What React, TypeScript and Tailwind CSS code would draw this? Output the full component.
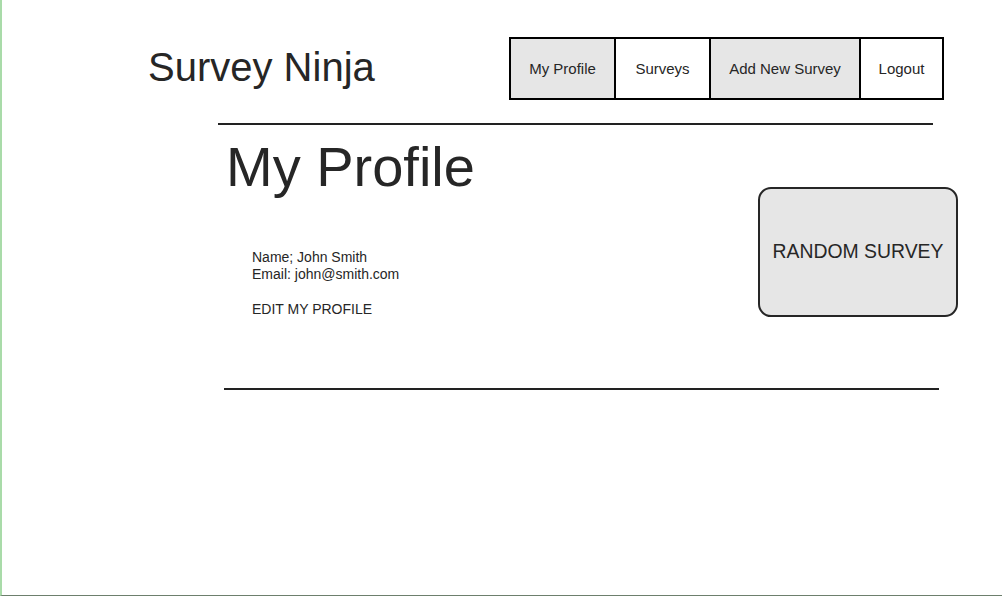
import React from 'react';

// Wireframe-style profile page

const navItems = [
  { label: 'My Profile', width: 'w-[105px]', shaded: true },
  { label: 'Surveys', width: 'w-[95px]', shaded: false },
  { label: 'Add New Survey', width: 'w-[150px]', shaded: true },
  { label: 'Logout', width: 'w-[81px]', shaded: false },
];

export default function App() {
  return (
    <div
      className="w-[1002px] h-[596px] bg-white border-l-2 border-l-[#a9dba9] border-b border-b-[#6d7f6d] flex flex-col text-[#262626] overflow-hidden"
      style={{ fontFamily: '"Liberation Sans", Arial, sans-serif' }}
    >
      {/* Header */}
      <header className="flex items-start pt-[37px] pl-[146px] pr-[58px]">
        <div className="h-[63px] pb-[4px] flex items-center">
          <h1 className="text-[40px] leading-none">Survey Ninja</h1>
        </div>
        <nav className="ml-auto flex h-[63px] border-2 border-black">
          {navItems.map((item, index) => (
            <div
              key={item.label}
              className={`${item.width} flex items-center justify-center pt-[2px] text-[15px] ${
                index < navItems.length - 1 ? 'border-r-2 border-black' : ''
              } ${item.shaded ? 'bg-[#e6e6e6]' : 'bg-white'}`}
            >
              {item.label}
            </div>
          ))}
        </nav>
      </header>

      {/* Top divider */}
      <div className="mt-[23px] ml-[216px] w-[715px] h-[2px] bg-[#222222]" />

      {/* Content */}
      <main className="flex justify-between h-[263px] pl-[224px] pr-[44px]">
        <div className="flex flex-col">
          <h2 className="mt-[14px] text-[56px] leading-none">My Profile</h2>
          <div className="mt-[54px] pl-[26px] text-[14px] leading-[17px]">
            <p>Name; John Smith</p>
            <p>Email: john@smith.com</p>
            <p className="mt-[18px]">EDIT MY PROFILE</p>
          </div>
        </div>
        <div className="mt-[62px] w-[200px] h-[130px] rounded-[13px] border-2 border-[#262626] bg-[#e6e6e6] flex items-center justify-center text-[19.4px]">
          RANDOM SURVEY
        </div>
      </main>

      {/* Bottom divider */}
      <div className="ml-[222px] w-[715px] h-[2px] bg-[#222222]" />
    </div>
  );
}
